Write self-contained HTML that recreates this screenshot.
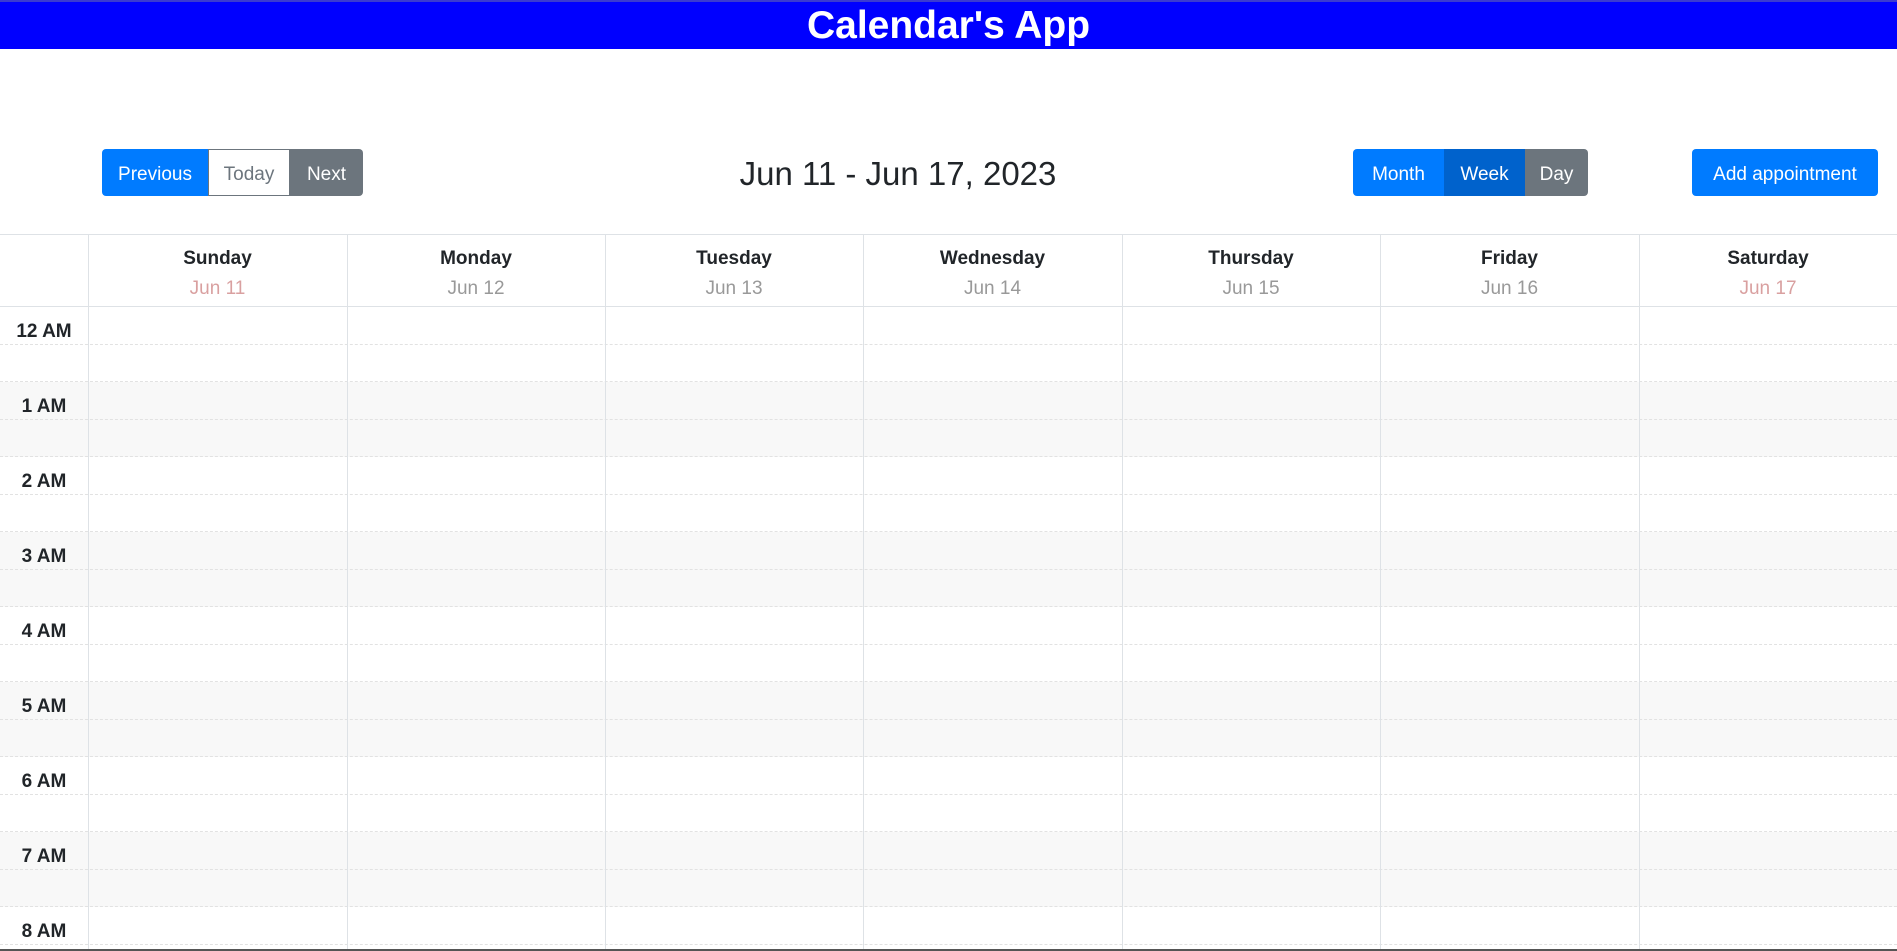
<!DOCTYPE html>
<html><head><meta charset="utf-8"><style>
*{box-sizing:border-box;margin:0;padding:0}
body{width:1897px;height:951px;overflow:hidden;background:#fff;font-family:"Liberation Sans",sans-serif;position:relative;color:#212529}
.hdr{position:absolute;left:0;top:0;width:1897px;height:49px;background:#0000ff;border-top:2px solid #3b3bd0;color:#fff;font-weight:bold;font-size:39px;text-align:center;line-height:48px}
.btn{position:absolute;top:149px;height:47px;line-height:51px;font-size:19px;color:#fff;text-align:center}
.title{position:absolute;left:640px;width:516px;top:152px;text-align:center;font-size:33px;line-height:44px;color:#212529}
.grid{position:absolute;left:0;top:234px;width:1897px;border-top:1px solid #dee2e6}
.head{position:absolute;top:234px;height:73px;border-bottom:1px solid #dee2e6;text-align:center}
.dn{font-weight:bold;font-size:19px;margin-top:14px}
.dd{font-size:19px;color:#999;margin-top:8px}
.vl{position:absolute;top:234px;bottom:0;width:1px;background:#dee2e6}
.row{position:absolute;left:0;width:1897px;height:37.5px;border-bottom:1px dashed #e2e2e2}
.g{background:#f8f8f8}
.t{position:absolute;left:0;width:88px;text-align:center;font-weight:bold;font-size:19px;line-height:39px}
</style></head><body>
<div class="hdr">Calendar's App</div>
<div class="btn" style="left:102px;width:106px;background:#007bff;border-radius:4px 0 0 4px">Previous</div>
<div class="btn" style="left:208px;width:82px;background:#fff;color:#6c757d;border:1px solid #6c757d;line-height:49px">Today</div>
<div class="btn" style="left:290px;width:73px;background:#6c757d;border-radius:0 4px 4px 0">Next</div>
<div class="title">Jun 11 - Jun 17, 2023</div>
<div class="btn" style="left:1353px;width:91px;background:#007bff;border-radius:4px 0 0 4px">Month</div>
<div class="btn" style="left:1444px;width:81px;background:#0062cc">Week</div>
<div class="btn" style="left:1525px;width:63px;background:#6c757d;border-radius:0 4px 4px 0">Day</div>
<div class="btn" style="left:1692px;width:186px;background:#007bff;border-radius:4px">Add appointment</div>
<div class="grid"></div>
<div class="head" style="left:0;width:1897px"></div>
<div class="head" style="left:88px;width:259px"><div class="dn">Sunday</div><div class="dd" style="color:#d9a0a0">Jun 11</div></div>
<div class="head" style="left:347px;width:258px"><div class="dn">Monday</div><div class="dd">Jun 12</div></div>
<div class="head" style="left:605px;width:258px"><div class="dn">Tuesday</div><div class="dd">Jun 13</div></div>
<div class="head" style="left:863px;width:259px"><div class="dn">Wednesday</div><div class="dd">Jun 14</div></div>
<div class="head" style="left:1122px;width:258px"><div class="dn">Thursday</div><div class="dd">Jun 15</div></div>
<div class="head" style="left:1380px;width:259px"><div class="dn">Friday</div><div class="dd">Jun 16</div></div>
<div class="head" style="left:1639px;width:258px"><div class="dn">Saturday</div><div class="dd" style="color:#d9a0a0">Jun 17</div></div>
<div class="row" style="top:307px"></div><div class="row" style="top:344.5px"></div>
<div class="row g" style="top:382px"></div><div class="row g" style="top:419.5px"></div>
<div class="row" style="top:457px"></div><div class="row" style="top:494.5px"></div>
<div class="row g" style="top:532px"></div><div class="row g" style="top:569.5px"></div>
<div class="row" style="top:607px"></div><div class="row" style="top:644.5px"></div>
<div class="row g" style="top:682px"></div><div class="row g" style="top:719.5px"></div>
<div class="row" style="top:757px"></div><div class="row" style="top:794.5px"></div>
<div class="row g" style="top:832px"></div><div class="row g" style="top:869.5px"></div>
<div class="row" style="top:907px"></div>
<div class="t" style="top:312px">12 AM</div>
<div class="t" style="top:387px">1 AM</div>
<div class="t" style="top:462px">2 AM</div>
<div class="t" style="top:537px">3 AM</div>
<div class="t" style="top:612px">4 AM</div>
<div class="t" style="top:687px">5 AM</div>
<div class="t" style="top:762px">6 AM</div>
<div class="t" style="top:837px">7 AM</div>
<div class="t" style="top:912px">8 AM</div>
<div class="vl" style="left:88px"></div><div class="vl" style="left:347px"></div><div class="vl" style="left:605px"></div><div class="vl" style="left:863px"></div><div class="vl" style="left:1122px"></div><div class="vl" style="left:1380px"></div><div class="vl" style="left:1639px"></div>
<div style="position:absolute;left:0;top:949px;width:1897px;height:2px;background:#555"></div>
</body></html>
